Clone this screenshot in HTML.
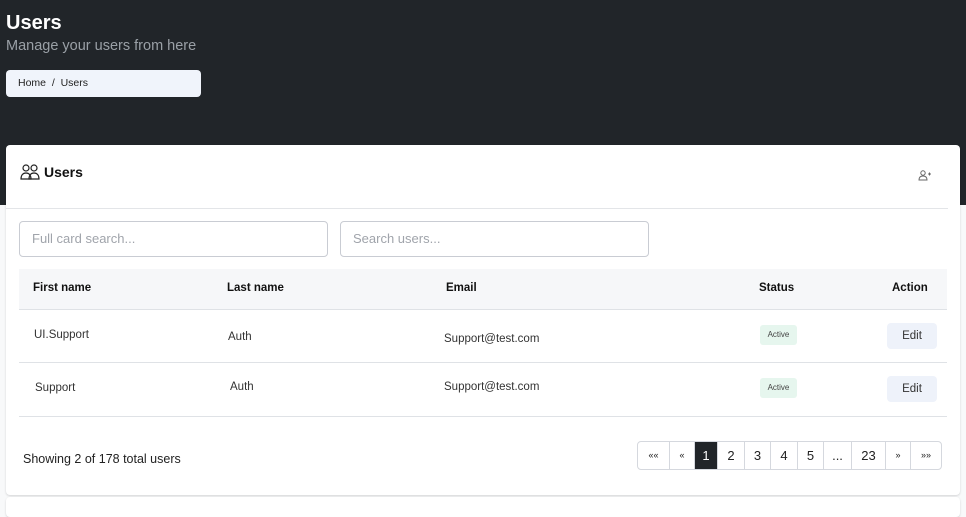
<!DOCTYPE html>
<html><head><style>
*{box-sizing:border-box;margin:0;padding:0}
body{width:966px;height:512px;overflow:hidden;background:#f8f9fa;font-family:"Liberation Sans",sans-serif;position:relative}
.hero{position:absolute;left:0;top:0;width:966px;height:205px;background:#212529}
.abs{position:absolute}
.card{position:absolute;left:6px;top:145px;width:954px;height:350px;background:#fff;border-radius:4px;box-shadow:0 1px 2px rgba(0,0,0,.15)}
.inp{position:absolute;top:221px;height:36px;border:1px solid #c9ccd3;border-radius:4px;color:#a0a4ab;font-size:13px;padding:9px 12px}
.th{position:absolute;top:282px;font-size:11.5px;font-weight:bold;color:#111}
.td{position:absolute;font-size:11.5px;color:#333}
.badge{position:absolute;left:760px;width:37px;height:20px;background:#e6f6ee;border-radius:3px;font-size:8px;color:#444;text-align:center;line-height:20px}
.edit{position:absolute;left:887px;width:50px;height:26px;background:#eef2fa;border-radius:4px;font-size:11.5px;color:#333;text-align:center;line-height:26px}
.pg{position:absolute;top:441px;left:637px;height:29px;display:flex;border:1px solid #d5d8de;border-radius:4px;overflow:hidden}
.pg div{border-left:1px solid #d5d8de;font-size:13px;color:#222;text-align:center;line-height:27px}
.pg div:first-child{border-left:none}
</style></head><body>
<div class="hero"></div>
<div class="abs" style="left:6px;top:12px;font-size:20px;font-weight:bold;color:#fff">Users</div>
<div class="abs" style="left:6px;top:38px;font-size:14.5px;color:#9aa0a6">Manage your users from here</div>
<div class="abs" style="left:6px;top:70px;width:195px;height:27px;background:#f0f4fb;border-radius:4px;font-size:10.5px;color:#222;padding:7px 12px">Home &nbsp;/ &nbsp;Users</div>
<div class="card"></div>
<svg class="abs" style="left:20px;top:164px" width="20" height="16" viewBox="0 0 20 16" fill="none" stroke="#222" stroke-width="1.2"><circle cx="6" cy="4" r="3"/><circle cx="14" cy="4" r="3"/><path d="M1 15c0-4 2-6 5-6s5 2 5 6z"/><path d="M9 15c0-4 2-6 5-6s5 2 5 6z"/></svg>
<div class="abs" style="left:44px;top:164px;font-size:14px;font-weight:bold;color:#111">Users</div>
<svg class="abs" style="left:918px;top:170px" width="14" height="11" viewBox="0 0 14 11" fill="none" stroke="#666" stroke-width="1"><circle cx="5" cy="3" r="2.2"/><path d="M1 10c0-3 2-4 4-4s4 1 4 4z"/><path d="M10 4h3M11.5 2.5v3"/></svg>
<div class="abs" style="left:6px;top:208px;width:942px;height:1px;background:#e3e5e8"></div>
<div class="inp" style="left:19px;width:309px">Full card search...</div>
<div class="inp" style="left:340px;width:309px">Search users...</div>
<div class="abs" style="left:19px;top:269px;width:928px;height:41px;background:#f6f7f9;border-bottom:1px solid #dfe2e6"></div>
<div class="th" style="left:33px">First name</div>
<div class="th" style="left:227px">Last name</div>
<div class="th" style="left:446px">Email</div>
<div class="th" style="left:759px">Status</div>
<div class="th" style="left:892px">Action</div>
<div class="td" style="left:34px;top:329px">UI.Support</div>
<div class="td" style="left:228px;top:331px">Auth</div>
<div class="td" style="left:444px;top:333px">Support@test.com</div>
<div class="badge" style="top:325px">Active</div>
<div class="edit" style="top:323px">Edit</div>
<div class="abs" style="left:19px;top:362px;width:928px;height:1px;background:#dfe2e6"></div>
<div class="td" style="left:35px;top:382px">Support</div>
<div class="td" style="left:230px;top:381px">Auth</div>
<div class="td" style="left:444px;top:381px">Support@test.com</div>
<div class="badge" style="top:378px">Active</div>
<div class="edit" style="top:376px">Edit</div>
<div class="abs" style="left:19px;top:416px;width:928px;height:1px;background:#dfe2e6"></div>
<div class="abs" style="left:23px;top:452px;font-size:12.5px;color:#222">Showing 2 of 178 total users</div>
<div class="pg">
<div style="width:31px;font-size:9px">««</div><div style="width:25px;font-size:9px">«</div><div style="width:23px;background:#212529;color:#fff">1</div><div style="width:27px">2</div><div style="width:26px">3</div><div style="width:27px">4</div><div style="width:26px">5</div><div style="width:28px">...</div><div style="width:34px">23</div><div style="width:25px;font-size:9px">»</div><div style="width:31px;font-size:9px">»»</div>
</div>
<div class="abs" style="left:6px;top:497px;width:954px;height:20px;background:#fff;border-radius:4px;box-shadow:0 1px 2px rgba(0,0,0,.15)"></div>
</body></html>
